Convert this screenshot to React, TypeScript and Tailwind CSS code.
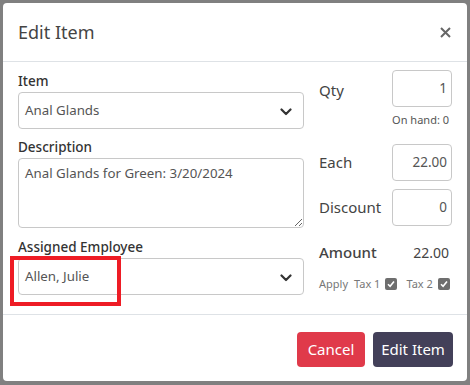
import React from 'react';

const font = { fontFamily: '"Noto Sans", "Open Sans", sans-serif' };

function Chevron() {
  return (
    <svg width="12" height="8" viewBox="0 0 12 8" className="mt-[2px] shrink-0">
      <polyline points="1.5,1.5 6,6 10.5,1.5" fill="none" stroke="#333" strokeWidth="2.2" strokeLinecap="round" strokeLinejoin="round" />
    </svg>
  );
}

function Select({ value }: { value: string }) {
  return (
    <div className="flex h-[37px] items-center justify-between rounded-[4px] border border-[#c8c8c8] pl-[6px] pr-[11px] text-[13.3px] text-[#555]">
      <span>{value}</span>
      <Chevron />
    </div>
  );
}

function NumInput({ value }: { value: string }) {
  return (
    <div className="flex h-[37px] w-[60px] items-center justify-end rounded-[4px] border border-[#c8c8c8] pr-[4px] text-[13.5px] text-[#555]">
      {value}
    </div>
  );
}

function Check() {
  return (
    <span className="inline-flex h-[12px] w-[12px] shrink-0 items-center justify-center rounded-[2px] bg-[#6e6e6e]">
      <svg width="10" height="10" viewBox="0 0 10 10">
        <polyline points="2,5.2 4.1,7.3 8,2.6" fill="none" stroke="#fff" strokeWidth="1.6" />
      </svg>
    </span>
  );
}

export default function App() {
  return (
    <div className="relative h-[385px] w-[470px] bg-[#808080] p-[3px]" style={font}>
      <div className="flex h-[378px] w-[464px] flex-col rounded-[4px] bg-white">
        <div className="flex h-[59px] items-center justify-between border-b border-[#dee2e6] pl-[15px] pr-[15px]">
          <h1 className="text-[18px] text-[#444]">Edit Item</h1>
          <svg width="11" height="11" viewBox="0 0 11 11" className="mr-[1px]">
            <path d="M1 1 L10 10 M10 1 L1 10" stroke="#666" strokeWidth="2" />
          </svg>
        </div>

        <div className="flex gap-[15px] border-b border-[#dee2e6] px-[15px] pb-[19px] pt-[8px]">
          <div className="flex w-[286px] flex-col">
            <label className="mt-[1px] h-[21px] text-[13.5px] font-medium leading-[21px] text-[#333]">Item</label>
            <Select value="Anal Glands" />
            <label className="mt-[8px] h-[21px] text-[13.5px] font-medium leading-[21px] text-[#333]">Description</label>
            <textarea
              readOnly
              defaultValue="Anal Glands for Green: 3/20/2024"
              className="h-[70px] rounded-[4px] border border-[#c8c8c8] px-[6px] py-[4px] text-[13.3px] leading-[20px] text-[#555] outline-none"
            />
            <label className="mt-[9px] h-[21px] text-[13.5px] font-medium leading-[21px] text-[#333]">Assigned Employee</label>
            <Select value="Allen, Julie" />
          </div>

          <div className="flex flex-1 flex-col text-[#444]">
            <div className="flex items-center justify-between">
              <span className="mt-[3px] text-[15px]">Qty</span>
              <NumInput value="1" />
            </div>
            <div className="mt-[5px] h-[16px] pr-[3px] text-right text-[11px] leading-[16px] text-[#555]">On hand: 0</div>
            <div className="mt-[16px] flex items-center justify-between">
              <span className="text-[15px]">Each</span>
              <NumInput value="22.00" />
            </div>
            <div className="mt-[8px] flex items-center justify-between">
              <span className="text-[15px]">Discount</span>
              <NumInput value="0" />
            </div>
            <div className="mt-[15px] flex items-center justify-between pr-[3px]">
              <span className="text-[15px] font-medium">Amount</span>
              <span className="text-[14px] text-[#444]">22.00</span>
            </div>
            <div className="mt-[12px] flex items-center gap-[5px] whitespace-nowrap text-[11px] text-[#777]">
              <span>Apply</span>
              <span className="ml-[1px]">Tax 1</span>
              <Check />
              <span className="ml-[4px]">Tax 2</span>
              <Check />
            </div>
          </div>
        </div>

        <div className="flex justify-end gap-[8px] px-[14px] pt-[17px]">
          <button className="h-[35px] w-[68px] rounded-[4px] bg-[#e03a4a] text-[15px] text-white">Cancel</button>
          <button className="h-[35px] w-[80px] rounded-[4px] bg-[#434059] text-[15px] text-white">Edit Item</button>
        </div>
      </div>

      <div className="absolute left-[10px] top-[256px] h-[50px] w-[111px] border-[4px] border-[#ee1c25]" />
    </div>
  );
}
